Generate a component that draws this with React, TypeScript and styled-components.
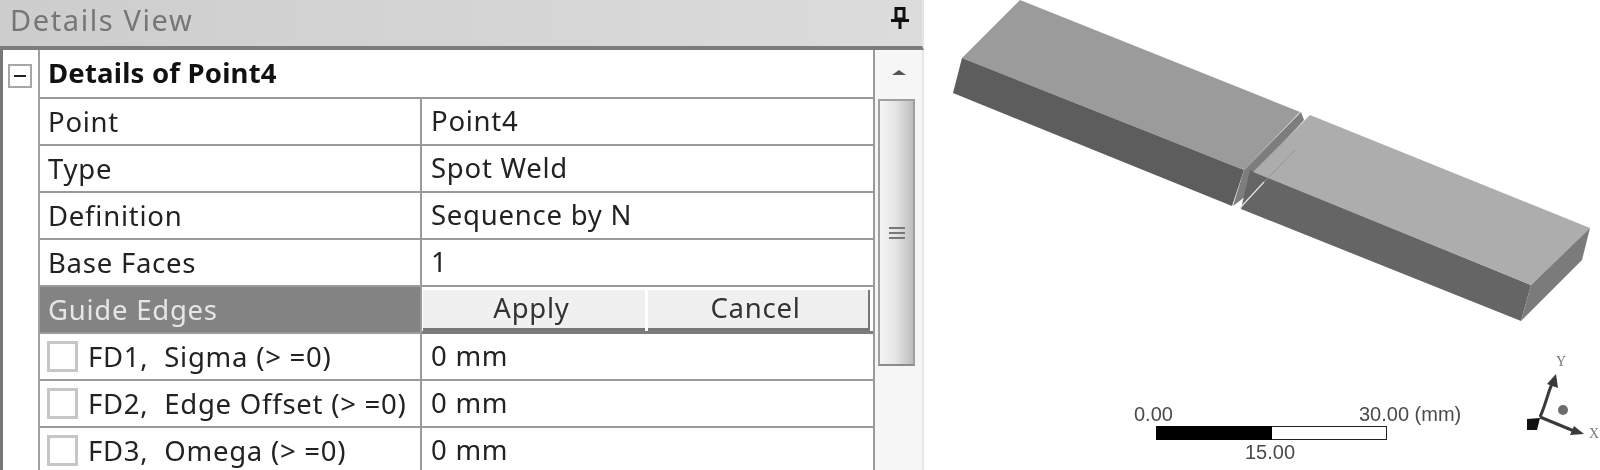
import React from 'react';
import styled, { createGlobalStyle } from 'styled-components';

const GlobalStyle = createGlobalStyle`
    html, body {
        margin: 0;
        padding: 0;
        background: #fff;
        overflow: hidden;
    }
`;

const Page = styled.div`
    display: flex;
    width: 1600px;
    height: 470px;
    overflow: hidden;
    background: #fff;
    font-family: "Noto Sans", "Open Sans", sans-serif;
    filter: blur(0.45px);
`;

const Panel = styled.div`
    width: 924px;
    flex: none;
    display: flex;
    flex-direction: column;
`;

const TitleBar = styled.div`
    height: 36px;
    flex: none;
    display: flex;
    align-items: center;
    justify-content: space-between;
    padding: 2px 13px 8px 10px;
    background: linear-gradient(90deg, #cdcdcd 0%, #dcdcdc 100%);
    border-bottom: 4px solid #7c7c7c;
    border-right: 2px solid #e4e4e4;
    color: #767676;
    font-size: 29px;
    line-height: 36px;
    letter-spacing: 1.6px;
`;

const Pin = styled.svg`
    margin-top: -4px;
`;

const Body = styled.div`
    flex: 1;
    display: flex;
    border-left: 3px solid #777;
    min-height: 0;
`;

const Gutter = styled.div`
    width: 37px;
    flex: none;
    padding: 14px 0 0 5px;
    box-sizing: border-box;
    border-right: 2px solid #a0a0a0;
`;

const Collapse = styled.div`
    width: 24px;
    height: 24px;
    box-sizing: border-box;
    display: flex;
    align-items: center;
    justify-content: center;
    border: 2px solid #a6a6a6;

    &::after {
        content: '';
        width: 12px;
        height: 2px;
        background: #222;
    }
`;

const Table = styled.div`
    width: 833px;
    flex: none;
    border-right: 2px solid #9a9a9a;
`;

const Row = styled.div<{ $head?: boolean }>`
    height: 47px;
    box-sizing: border-box;
    display: grid;
    grid-template-columns: 382px 1fr;
    border-bottom: 2px solid #9a9a9a;
    font-size: 27.5px;
    letter-spacing: 0.75px;
    color: #222;
    line-height: 44px;

    ${props => props.$head && `
        height: 49px;
        grid-template-columns: 1fr;
        font-weight: 700;
        color: #111;
        letter-spacing: 0.2px;
    `}
`;

const LabelCell = styled.div<{ $active?: boolean }>`
    display: flex;
    align-items: center;
    gap: 10px;
    padding-left: 8px;
    border-right: 2px solid #9a9a9a;
    white-space: nowrap;
    background: ${props => (props.$active ? '#838383' : 'transparent')};
    color: ${props => (props.$active ? '#e6e6e6' : 'inherit')};
`;

const HeadCell = styled.div`
    padding: 1px 0 0 8px;
`;

const ValueCell = styled.div`
    padding-left: 9px;
    white-space: nowrap;
`;

const CheckBox = styled.span`
    width: 31px;
    height: 31px;
    box-sizing: border-box;
    flex: none;
    margin-left: -1px;
    border: 3px solid #c6c6c6;
    background: #fff;
`;

const LabelText = styled.span`
    white-space: pre;
`;

const ButtonCell = styled.div`
    display: grid;
    grid-template-columns: 222px 1fr;
    gap: 3px;
    padding: 3px 3px 0 1px;
    border-bottom: 3px solid #7c7c7c;
    margin-bottom: -2px;
`;

const ActionButton = styled.div`
    display: flex;
    align-items: center;
    justify-content: center;
    background: #f0f0f0;
    border-bottom: 3px solid #777;
    color: #333;
    line-height: 1;
    padding: 0 5px 2px 0;

    &:last-child {
        border-right: 2px solid #777;
    }
`;

const ScrollBar = styled.div`
    flex: 1;
    position: relative;
    background: #f6f6f6;
    border-right: 2px solid #e6e6e6;
`;

const ScrollArrow = styled.div`
    position: absolute;
    top: 20px;
    left: 17px;
    width: 0;
    height: 0;
    border-left: 7px solid transparent;
    border-right: 7px solid transparent;
    border-bottom: 5px solid #555;
`;

const ScrollThumb = styled.div`
    position: absolute;
    top: 49px;
    left: 3px;
    width: 37px;
    height: 267px;
    box-sizing: border-box;
    border: 2px solid #a0a0a0;
    border-bottom-color: #8c8c8c;
    background: linear-gradient(90deg, #f4f4f4 0%, #e6e6e6 45%, #bdbdbd 100%);
    display: flex;
    flex-direction: column;
    gap: 3px;
    align-items: center;
    justify-content: center;
`;

const Grip = styled.span`
    width: 16px;
    height: 2px;
    background: #777;
`;

const Viewport = styled.svg`
    flex: 1;
    height: 470px;
    display: block;
`;

const PinIcon = () => (
    <Pin width="18" height="22" viewBox="0 0 18 22">
        <path d="M5 1.5h8V12H5z" fill="none" stroke="#111" strokeWidth="3" />
        <path d="M0 12h18v3H0z" fill="#111" />
        <path d="M7.5 15h3v7h-3z" fill="#111" />
    </Pin>
);

interface PropertyRow {
    label: string;
    value: string;
    checkbox?: boolean;
}

const plainRows: PropertyRow[] = [
    { label: 'Point', value: 'Point4' },
    { label: 'Type', value: 'Spot Weld' },
    { label: 'Definition', value: 'Sequence by N' },
    { label: 'Base Faces', value: '1' },
];

const checkRows: PropertyRow[] = [
    { label: 'FD1,  Sigma (> =0)', value: '0 mm', checkbox: true },
    { label: 'FD2,  Edge Offset (> =0)', value: '0 mm', checkbox: true },
    { label: 'FD3,  Omega (> =0)', value: '0 mm', checkbox: true },
];

const PropertyLine = ({ label, value, checkbox }: PropertyRow) => (
    <Row>
        <LabelCell>
            {checkbox && <CheckBox />}
            <LabelText>{label}</LabelText>
        </LabelCell>
        <ValueCell>{value}</ValueCell>
    </Row>
);

// The viewport starts at x = 924, drawing coordinates are page coordinates
const Model = () => (
    <Viewport viewBox="924 0 676 470">
        <polygon points="1020,0 1300,112 1244,170 962,58" fill="#9b9b9b" />
        <polygon points="962,58 953,93 1232,206 1244,170" fill="#5d5d5d" />
        <polygon points="1301,112 1304,120 1254,174 1246,196 1233,206 1244,170" fill="#7d7d7d" />
        <polygon points="1250,170 1531,285 1521,321 1241,209" fill="#656565" />
        <polygon points="1310,115 1590,228 1531,285 1253,172" fill="#adadad" />
        <polygon points="1590,228 1531,285 1521,321 1582,260" fill="#7b7b7b" />
        <line x1="1295" y1="150" x2="1264" y2="182" stroke="#949494" strokeWidth="1" />
        <line x1="1264" y1="182" x2="1240" y2="208" stroke="#e4e4e4" strokeWidth="1.2" />

        <g fontFamily="'Liberation Sans', sans-serif" fontSize="20" fill="#4a4a4a">
            <text x="1134" y="421">0.00</text>
            <text x="1359" y="421">30.00 (mm)</text>
            <text x="1245" y="459">15.00</text>
        </g>
        <rect x="1156.5" y="426.5" width="230" height="13" fill="#fff" stroke="#222" />
        <rect x="1156" y="426" width="116" height="14" fill="#000" />

        <g stroke="#3a3a3a" fill="#3a3a3a">
            <path d="M1540 417 C1546 404 1548 392 1552 384" fill="none" strokeWidth="3" />
            <polygon points="1556,374 1558,388 1547,384" stroke="none" />
            <line x1="1540" y1="417" x2="1574" y2="431" strokeWidth="3" />
            <polygon points="1584,434 1570,435 1574,426" stroke="none" />
            <polygon points="1527,419 1540,418 1537,430 1527,430" fill="#111" stroke="none" />
            <circle cx="1563" cy="410" r="5" fill="#6c6c6c" stroke="none" />
        </g>
        <g fontFamily="'Liberation Serif', serif" fontSize="14" fill="#777">
            <text x="1556" y="366">Y</text>
            <text x="1589" y="438">X</text>
        </g>
    </Viewport>
);

const App: React.FC = () => (
    <>
        <GlobalStyle />
        <Page>
            <Panel>
                <TitleBar>
                    <span>Details View</span>
                    <PinIcon />
                </TitleBar>
                <Body>
                    <Gutter>
                        <Collapse />
                    </Gutter>
                    <Table>
                        <Row $head>
                            <HeadCell>Details of Point4</HeadCell>
                        </Row>
                        {plainRows.map(row => (
                            <PropertyLine key={row.label} {...row} />
                        ))}
                        <Row>
                            <LabelCell $active>Guide Edges</LabelCell>
                            <ButtonCell>
                                <ActionButton>Apply</ActionButton>
                                <ActionButton>Cancel</ActionButton>
                            </ButtonCell>
                        </Row>
                        {checkRows.map(row => (
                            <PropertyLine key={row.label} {...row} />
                        ))}
                    </Table>
                    <ScrollBar>
                        <ScrollArrow />
                        <ScrollThumb>
                            <Grip />
                            <Grip />
                            <Grip />
                        </ScrollThumb>
                    </ScrollBar>
                </Body>
            </Panel>
            <Model />
        </Page>
    </>
);

export default App;
